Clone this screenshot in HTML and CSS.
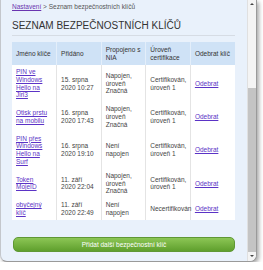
FILE: index.html
```html
<!DOCTYPE html>
<html lang="cs">
<head>
    <meta charset="UTF-8">
    <title>Seznam bezpečnostních klíčů</title>
    <link rel="stylesheet" href="styles.css">
</head>
<body>
    <div class="window">
        <div class="viewport">
            <p class="crumbs"><a href="#">Nastavení</a> &gt; Seznam bezpečnostních klíčů</p>
            <h1>Seznam bezpečnostních klíčů</h1>

            <table class="keys">
                <thead>
                    <tr>
                        <th>Jméno klíče</th>
                        <th>Přidáno</th>
                        <th>Propojeno s NIA</th>
                        <th>Úroveň certifikace</th>
                        <th>Odebrat klíč</th>
                    </tr>
                </thead>
                <tbody>
                    <tr>
                        <td><a href="#">PIN ve Windows Hello na Jiri3</a></td>
                        <td>15. srpna 2020 10:27</td>
                        <td>Napojen, úroveň Značná</td>
                        <td>Certifikován, úroveň 1</td>
                        <td><a href="#">Odebrat</a></td>
                    </tr>
                    <tr>
                        <td><a href="#">Otisk prstu na mobilu</a></td>
                        <td>16. srpna 2020 17:43</td>
                        <td>Napojen, úroveň Značná</td>
                        <td>Certifikován, úroveň 1</td>
                        <td><a href="#">Odebrat</a></td>
                    </tr>
                    <tr>
                        <td><a href="#">PIN přes Windows Hello na Surf</a></td>
                        <td>16. srpna 2020 19:10</td>
                        <td>Není napojen</td>
                        <td>Certifikován, úroveň 1</td>
                        <td><a href="#">Odebrat</a></td>
                    </tr>
                    <tr>
                        <td><a href="#">Token MojeID</a></td>
                        <td>11. září 2020 22:04</td>
                        <td>Napojen, úroveň Značná</td>
                        <td>Certifikován, úroveň 1</td>
                        <td><a href="#">Odebrat</a></td>
                    </tr>
                    <tr>
                        <td><a href="#">obyčejný klíč</a></td>
                        <td>11. září 2020 22:49</td>
                        <td>Není napojen</td>
                        <td>Necertifikován</td>
                        <td><a href="#">Odebrat</a></td>
                    </tr>
                </tbody>
            </table>

            <button class="add">Přidat další bezpečnostní klíč</button>
        </div>

        <div class="scrollbar">
            <span class="arrow up"></span>
            <div class="track"><div class="thumb"></div></div>
            <span class="arrow down"></span>
        </div>
    </div>
</body>
</html>
```

FILE: styles.css
```css
body {
    margin: 0;
    background: #fff;
    font-family: 'Liberation Sans', Arial, sans-serif;
}

.window {
    display: flex;
    width: 255px;
    height: 261px;
    background-color: #e9f1fb;
    border-left: 1px solid #c4c7cc;
    border-right: 1px solid #9a9a9a;
    border-bottom: 1px solid #9a9a9a;
    border-radius: 0 0 7px 7px;
    box-shadow: 2px 2px 4px rgba(0, 0, 0, 0.35);
    overflow: hidden;
}

.viewport {
    flex: 1;
    padding: 3px 12px 0 11px;
}

.crumbs {
    margin: 0;
    font-size: 6.5px;
    line-height: 8px;
    color: #555;
}

.crumbs a {
    color: #6a35b0;
}

h1 {
    margin: 9px 0 0;
    padding-bottom: 3px;
    font-size: 10px;
    line-height: 12px;
    font-weight: normal;
    text-transform: uppercase;
    color: #333;
    border-bottom: 1px solid #d6dce4;
}

.keys {
    width: 223px;
    margin-top: 6px;
    border-collapse: collapse;
    table-layout: fixed;
    font-size: 6.5px;
    line-height: 7.8px;
    color: #444;
}

.keys th {
    height: 23px;
    padding: 0 4px;
    background-color: #cfe2f6;
    font-weight: normal;
    text-align: left;
    color: #333;
    border-left: 1px solid #e3eefa;
}

.keys td {
    padding: 3px 4px;
    background-color: #fff;
    vertical-align: middle;
    border-left: 1px solid #e4e4e4;
}

.keys th:first-child,
.keys td:first-child {
    border-left: none;
}

.keys a {
    color: #5b33c6;
}

.add {
    display: block;
    width: 222px;
    height: 15px;
    margin: 17px 0 0 1px;
    padding: 0;
    border: 1px solid #5f9834;
    border-radius: 5px;
    background: linear-gradient(to bottom, #8cc655, #5f9f2d);
    color: #fff;
    font-family: inherit;
    font-size: 6.5px;
}

.scrollbar {
    display: flex;
    flex-direction: column;
    width: 8px;
    background-color: #f4f4f4;
    border-left: 1px solid #e0e0e0;
}

.arrow {
    height: 9px;
    position: relative;
}

.arrow::after {
    content: "";
    position: absolute;
    left: 2px;
    top: 3px;
    border-left: 2px solid transparent;
    border-right: 2px solid transparent;
}

.arrow.up::after {
    border-bottom: 2px solid #444;
}

.arrow.down::after {
    border-top: 2px solid #444;
}

.track {
    flex: 1;
    display: flex;
    flex-direction: column;
    justify-content: flex-end;
}

.thumb {
    height: 164px;
    background-color: #c4c4c4;
}
```
